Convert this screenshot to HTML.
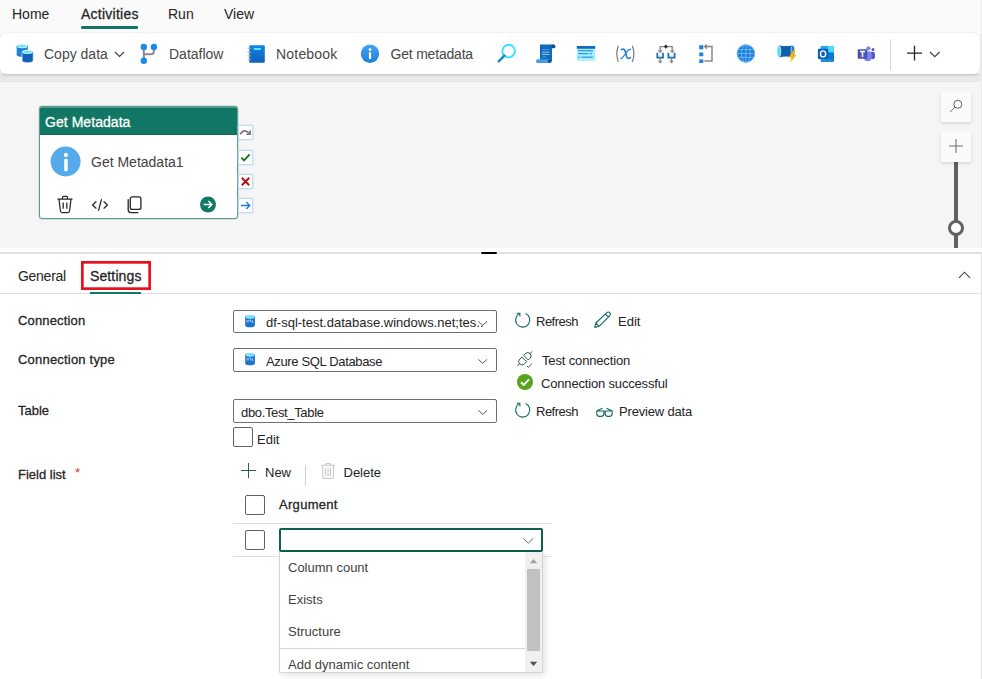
<!DOCTYPE html>
<html><head><meta charset="utf-8">
<style>
*{box-sizing:border-box;margin:0;padding:0}
html,body{width:982px;height:679px;overflow:hidden;background:#fafafa;font-family:"Liberation Sans",sans-serif;color:#242424}
.a{position:absolute}
.t{position:absolute;white-space:nowrap;line-height:1}
.s14{font-size:14px}
.s13{font-size:13px}
.b{font-weight:700}
.sb{-webkit-text-stroke:0.28px currentColor}
svg{position:absolute;overflow:visible}
</style></head><body>

<!-- top tabs -->
<div class="t s14" style="left:12px;top:7px">Home</div>
<div class="t s14 sb" style="left:81px;top:7px;letter-spacing:0.25px">Activities</div>
<div class="a" style="left:81px;top:26px;width:57px;height:3px;background:#117865;border-radius:1px"></div>
<div class="t s14" style="left:168px;top:7px">Run</div>
<div class="t s14" style="left:224px;top:7px">View</div>

<!-- toolbar card -->
<div class="a" style="left:0;top:74px;width:982px;height:8px;background:linear-gradient(#e6e6e6,#ececec)"></div>
<div class="a" style="left:0;top:33px;width:980px;height:41px;background:#fff;border-radius:6px;box-shadow:0 1px 3px rgba(0,0,0,.18),0 0 1px rgba(0,0,0,.1)"></div>

<div class="t s14" style="left:44px;top:47px;color:#474747">Copy data</div>
<div class="t s14" style="left:169px;top:47px;color:#474747">Dataflow</div>
<div class="t s14" style="left:276px;top:47px;color:#474747;letter-spacing:0.2px">Notebook</div>
<div class="t s14" style="left:390.5px;top:47px;color:#474747;letter-spacing:-0.2px">Get metadata</div>


<!-- toolbar icons -->
<svg style="left:16px;top:44px" width="18" height="19" viewBox="0 0 18 19">
 <path d="M0.7,2.3 A5.6,1.9 0 0 1 11.9,2.3 V11 A5.6,1.9 0 0 1 0.7,11 Z" fill="#1d7fd6"/>
 <ellipse cx="6.3" cy="2.3" rx="5.0" ry="1.5" fill="#50e6ff" stroke="#fff" stroke-width=".8"/>
 <path d="M6.1,8 A5.55,1.9 0 0 1 17.2,8 V16.8 A5.55,1.9 0 0 1 6.1,16.8 Z" fill="#0f62b6" stroke="#fff" stroke-width=".6"/>
 <ellipse cx="11.65" cy="8" rx="5.0" ry="1.5" fill="#50e6ff" stroke="#fff" stroke-width=".8"/>
</svg>
<svg style="left:114px;top:51px" width="11" height="7" viewBox="0 0 11 7"><path d="M1,1 L5.5,5.5 L10,1" fill="none" stroke="#424242" stroke-width="1.2"/></svg>

<svg style="left:138px;top:42px" width="20" height="22" viewBox="0 0 20 22">
 <path d="M5.8,5 V18.8 M5.8,12.2 H12.9 Q15.9,12.2 15.9,9 V5" fill="none" stroke="#8a8a8a" stroke-width="2"/>
 <circle cx="5.8" cy="5" r="3.2" fill="#1f8ae6"/><circle cx="15.9" cy="5" r="3.2" fill="#1f8ae6"/><circle cx="5.8" cy="18.8" r="3.2" fill="#1f8ae6"/>
</svg>

<svg style="left:246px;top:44px" width="20" height="20" viewBox="0 0 20 20">
 <defs><linearGradient id="nb" x1="0" y1="0" x2="0" y2="1"><stop offset="0" stop-color="#1684e0"/><stop offset="1" stop-color="#0b62b8"/></linearGradient></defs>
 <rect x="3.2" y="1.2" width="15.6" height="17.5" rx="1" fill="url(#nb)"/>
 <rect x="7.9" y="4" width="7" height="2" fill="#50e6ff"/>
 <rect x="1.6" y="3.8" width="3" height="1.2" fill="#b8b8b8"/><rect x="1.6" y="7.6" width="3" height="1.2" fill="#b8b8b8"/><rect x="1.6" y="11.2" width="3" height="1.2" fill="#b8b8b8"/><rect x="1.6" y="14.8" width="3" height="1.2" fill="#b8b8b8"/>
</svg>

<svg style="left:360px;top:44px" width="20" height="20" viewBox="0 0 20 20">
 <defs><linearGradient id="ig" x1="0" y1="0" x2="0" y2="1"><stop offset="0" stop-color="#44a4ee"/><stop offset="1" stop-color="#1c7fdc"/></linearGradient></defs>
 <circle cx="10" cy="9.8" r="9.2" fill="url(#ig)"/>
 <circle cx="10" cy="5.6" r="1.35" fill="#fff"/><rect x="8.9" y="8" width="2.2" height="7.3" rx="1" fill="#fff"/>
</svg>

<svg style="left:496px;top:42px" width="22" height="22" viewBox="0 0 22 22">
 <circle cx="12.6" cy="9.1" r="6.3" fill="none" stroke="#3fe0ff" stroke-width="2"/>
 <path d="M8.3,13.6 L2.7,19.4" stroke="#1a8fc0" stroke-width="2.6" stroke-linecap="round"/>
</svg>

<svg style="left:536px;top:44px" width="20" height="20" viewBox="0 0 20 20">
 <path d="M4.2,0.6 H17.5 A1.8,1.8 0 0 1 17.5,4.2 H16 V16.5 A2,2 0 0 1 14,18.5 H4 V2.6 A2,2 0 0 1 4.2,0.6Z" fill="#0f6cbd"/>
 <ellipse cx="17.3" cy="2.4" rx="2.1" ry="1.8" fill="#0a4f96"/>
 <path d="M1.8,15.3 H13.3 V19 H1.8 A1.85,1.85 0 0 1 1.8,15.3Z" fill="#4a9ae8"/>
 <ellipse cx="13.5" cy="17.2" rx="1.6" ry="1.9" fill="#0a55a0"/>
 <rect x="6" y="5.2" width="7.5" height="1" fill="#3f95e0"/><rect x="6" y="7.7" width="7.5" height="1" fill="#8cc4f2"/><rect x="6" y="10" width="7.5" height="1" fill="#8cc4f2"/><rect x="6" y="12.5" width="4.5" height="1" fill="#3f95e0"/>
</svg>

<svg style="left:576px;top:45px" width="20" height="17" viewBox="0 0 20 17">
 <rect x="0.8" y="1.1" width="18.4" height="14.7" fill="#a6efff"/>
 <rect x="0.8" y="1.1" width="18.4" height="2.7" rx=".6" fill="#0f6cbd"/>
 <rect x="2.2" y="5.2" width="14.6" height="1.1" fill="#2185e0"/>
 <rect x="2.2" y="8.1" width="10" height="1.1" fill="#2185e0"/><rect x="13.6" y="8.1" width="2.2" height="1.1" fill="#2185e0"/>
 <rect x="2.2" y="11.6" width="1.6" height="1.1" fill="#2185e0"/><rect x="5.4" y="11.6" width="11.4" height="1.1" fill="#2185e0"/>
</svg>
<svg style="left:614px;top:44px" width="24" height="20" viewBox="0 0 24 20">
 <path d="M4.3,1.8 Q1.4,9.8 4.3,17.8 M18.2,1.8 Q21.6,9.8 18.2,17.8" fill="none" stroke="#6e6e6e" stroke-width="1.1"/>
 <path d="M7.6,5.6 C9.4,4.6 10.6,5.2 11.3,7.6 L12.6,12.4 C13.2,14.4 14.4,15 16.4,13.6" fill="none" stroke="#1f7fd8" stroke-width="1.7" stroke-linecap="round"/>
 <path d="M16.4,5.4 C15.6,5 15,5.4 14.2,6.2 L9,13 C8.2,14.2 7.6,14.8 6.9,14.3" fill="none" stroke="#1f7fd8" stroke-width="1.2" stroke-linecap="round"/>
</svg>

<svg style="left:655px;top:44px" width="22" height="20" viewBox="0 0 22 20">
 <path d="M5.2,8 V2.6 H17.2 V8" fill="none" stroke="#8a8a8a" stroke-width="1.4"/>
 <path d="M3.4,6.4 L5.2,8.4 L7,6.4 M15.4,6.4 L17.2,8.4 L19,6.4" fill="none" stroke="#8a8a8a" stroke-width="1.3"/>
 <path d="M10.9,0.5 L13,2.6 L10.9,4.7 L8.8,2.6Z" fill="#333"/>
 <path d="M2.3,8.7 V13.6 H8 V8.7 M13.4,8.7 V13.6 H19.6 V8.7" fill="none" stroke="#0f6cbd" stroke-width="1.7"/>
 <path d="M5.2,13.6 V18.6 M16.5,13.6 V18.6" stroke="#8a8a8a" stroke-width="1.3"/>
 <path d="M3.6,16.8 L5.2,18.6 L6.8,16.8 M14.9,16.8 L16.5,18.6 L18.1,16.8" fill="none" stroke="#8a8a8a" stroke-width="1.3"/>
</svg>

<svg style="left:698px;top:44px" width="16" height="20" viewBox="0 0 16 20">
 <rect x="1.2" y="1.2" width="4.1" height="4.1" fill="#1b86e0"/><rect x="1.2" y="8.5" width="4.1" height="3.8" fill="#1b86e0"/><rect x="1.2" y="15.4" width="4.1" height="3.6" fill="#1b86e0"/>
 <path d="M6.4,17.1 H14 V2.6 H7" fill="none" stroke="#8a8a8a" stroke-width="1.5"/>
 <path d="M9,0.6 L6.6,2.6 L9,4.6" fill="none" stroke="#8a8a8a" stroke-width="1.4"/>
</svg>

<svg style="left:736px;top:44px" width="20" height="20" viewBox="0 0 20 20">
 <circle cx="9.9" cy="9.5" r="9" fill="#1b7fdb"/>
 <g fill="none" stroke="#7cbcf2" stroke-width=".8"><ellipse cx="9.9" cy="9.5" rx="4.4" ry="9"/><path d="M9.9,0.5 V18.5 M1.6,5.6 H18.2 M0.9,9.5 H18.9 M1.6,13.4 H18.2"/><circle cx="9.9" cy="9.5" r="8.8"/></g>
</svg>

<svg style="left:776px;top:44px" width="21" height="19" viewBox="0 0 21 19">
 <path d="M3,1.2 Q10,3 17,1.2 V13.4 Q10,11.6 3,13.4Z" fill="#0f5fb0"/>
 <ellipse cx="17" cy="7.3" rx="1.9" ry="6.1" fill="#1a7fd6" stroke="#fff" stroke-width=".6"/>
 <ellipse cx="2.8" cy="7.3" rx="1.9" ry="6.1" fill="#50e0ff" stroke="#fff" stroke-width=".7"/>
 <path d="M17.8,5.6 L12.6,13.6 H15.8 L13.6,18.8 L20.6,11 H17.4 L19.2,5.6Z" fill="#ffb100"/>
</svg>

<svg style="left:817px;top:45px" width="18" height="17" viewBox="0 0 18 17">
 <rect x="3.8" y="0.9" width="13.2" height="15.9" rx=".8" fill="#0f78d4"/>
 <rect x="10.4" y="0.9" width="6.6" height="6.5" fill="#50d9ff"/>
 <rect x="3.8" y="0.9" width="6.6" height="6.5" fill="#28a8ea"/>
 <path d="M3.8,9 L17,16.8 H3.8Z" fill="#1490df"/>
 <rect x="0.9" y="3.7" width="10.4" height="10.4" rx="1" fill="#0a5fb0"/>
 <ellipse cx="6.1" cy="8.9" rx="2.6" ry="3" fill="none" stroke="#fff" stroke-width="1.4"/>
</svg>

<svg style="left:857px;top:46px" width="18" height="16" viewBox="0 0 18 16">
 <circle cx="16" cy="3.4" r="1.5" fill="#5059c9"/>
 <rect x="13.7" y="5.8" width="4.2" height="7.4" rx="2" fill="#5059c9"/>
 <circle cx="11.4" cy="2.3" r="2.1" fill="#7b83eb"/>
 <path d="M7.2,5.6 H14.6 V11.5 A3.8,3.8 0 0 1 7,11.5Z" fill="#7b83eb"/>
 <rect x="0.7" y="3.2" width="9.6" height="9.6" rx=".8" fill="#4b53bc"/>
 <path d="M3,5.6 H8 M5.5,5.6 V11" stroke="#fff" stroke-width="1.5"/>
</svg>

<div class="a" style="left:890px;top:39px;width:1px;height:31px;background:#d6d6d6"></div>
<svg style="left:906px;top:45px" width="17" height="17" viewBox="0 0 17 17"><path d="M8.5,0.8 V15.6 M1,8.2 H16" stroke="#242424" stroke-width="1.3"/></svg>
<svg style="left:929px;top:51px" width="12" height="7" viewBox="0 0 12 7"><path d="M1,1 L5.8,5.6 L10.6,1" fill="none" stroke="#424242" stroke-width="1.2"/></svg>

<!-- canvas -->
<div class="a" style="left:981px;top:33px;width:1px;height:221px;background:#e9e9e9"></div>
<div class="a" style="left:0;top:81px;width:981px;height:167px;background:#f5f5f5;border-top:1px solid #e3e3e3;border-top-right-radius:6px"></div>

<!-- activity card -->
<div class="a" style="left:39px;top:106px;width:199px;height:113px;background:#fff;border:1px solid #5a9f91;border-radius:3px;overflow:hidden;box-shadow:0 0 0 .5px rgba(90,159,145,.45)">
  <div class="a" style="left:0;top:0;width:199px;height:28px;background:#127664;border-top:1px solid #4f9a8a;border-bottom:1px solid #0b6a59"></div>
</div>
<div class="t s14 sb" style="left:45px;top:115px;color:#fff;letter-spacing:0.05px">Get Metadata</div>
<div class="t s14" style="left:91px;top:155px;color:#424242">Get Metadata1</div>


<svg style="left:50px;top:146px" width="31" height="31" viewBox="0 0 31 31">
 <circle cx="15.6" cy="15.5" r="15" fill="#55aaeb"/>
 <circle cx="15.9" cy="8.9" r="2.1" fill="#fff"/><rect x="14.2" y="12.8" width="3.5" height="12.4" rx="1.2" fill="#fff"/>
</svg>
<svg style="left:56px;top:195px" width="18" height="19" viewBox="0 0 18 19">
 <path d="M1.5,4 H16.5 M6.5,4 V2.6 A1.3,1.3 0 0 1 7.8,1.3 H10.2 A1.3,1.3 0 0 1 11.5,2.6 V4 M3,4 L4.4,15.8 A2,2 0 0 0 6.4,17.6 H11.6 A2,2 0 0 0 13.6,15.8 L15,4 M7.2,7.6 V13.8 M10.8,7.6 V13.8" fill="none" stroke="#242424" stroke-width="1.25"/>
</svg>
<svg style="left:91px;top:198px" width="18" height="14" viewBox="0 0 18 14">
 <path d="M5,3.8 L1.6,7 L5,10.2 M13,3.8 L16.4,7 L13,10.2 M10.4,1.6 L7.6,12.4" fill="none" stroke="#242424" stroke-width="1.25" stroke-linecap="round"/>
</svg>
<svg style="left:126px;top:195px" width="17" height="19" viewBox="0 0 17 19">
 <rect x="4.3" y="1.8" width="10.6" height="12.6" rx="2" fill="none" stroke="#242424" stroke-width="1.3"/>
 <path d="M2.2,4.2 V14.8 A2.8,2.8 0 0 0 5,17.6 H12.4" fill="none" stroke="#242424" stroke-width="1.3"/>
</svg>
<svg style="left:199px;top:196px" width="18" height="18" viewBox="0 0 18 18">
 <circle cx="9" cy="8.5" r="8" fill="#117865"/>
 <path d="M4.6,8.5 H12.8 M9.4,5 L12.9,8.5 L9.4,12" fill="none" stroke="#fff" stroke-width="1.4"/>
</svg>
<!-- handles -->
<div class="a" style="left:238.5px;top:126px;width:13px;height:13px;background:#fff;box-shadow:0 0 1.5px 1px #b4d3f0"></div>
<div class="a" style="left:238.5px;top:151px;width:13px;height:13px;background:#fff;box-shadow:0 0 1.5px 1px #b4d3f0"></div>
<div class="a" style="left:238.5px;top:175px;width:13px;height:13px;background:#fff;box-shadow:0 0 1.5px 1px #b4d3f0"></div>
<div class="a" style="left:238.5px;top:199px;width:13px;height:13px;background:#fff;box-shadow:0 0 1.5px 1px #b4d3f0"></div>
<svg style="left:238.5px;top:126px" width="13" height="13" viewBox="0 0 13 13"><path d="M1.2,8.2 Q4.6,2.6 9,6.2" fill="none" stroke="#7a7a7a" stroke-width="1.8"/><path d="M6.6,9 L12,9 L12,3.8Z" fill="#7a7a7a"/></svg>
<svg style="left:238.5px;top:151px" width="13" height="13" viewBox="0 0 14 14"><path d="M2.5,7.2 L5.5,10.2 L11.5,3.6" fill="none" stroke="#107c10" stroke-width="2"/></svg>
<svg style="left:238.5px;top:175px" width="13" height="13" viewBox="0 0 14 14"><path d="M3,3 L11,11 M11,3 L3,11" fill="none" stroke="#b3101c" stroke-width="2.1"/></svg>
<svg style="left:238.5px;top:199px" width="13" height="13" viewBox="0 0 14 14"><path d="M2,7 H11.5 M7.8,3.3 L11.5,7 L7.8,10.7" fill="none" stroke="#1f7ad6" stroke-width="1.5"/></svg>

<!-- zoom controls -->
<div class="a" style="left:941px;top:92px;width:30px;height:30px;background:#fafafa;box-shadow:0 1.5px 3px rgba(0,0,0,.13)"></div>
<svg style="left:941px;top:92px" width="30" height="30" viewBox="0 0 30 30"><circle cx="16.8" cy="12.3" r="4" fill="none" stroke="#616161" stroke-width="1"/><path d="M14,15.1 L9.2,19.9" stroke="#616161" stroke-width="1"/></svg>
<div class="a" style="left:954px;top:160px;width:4px;height:88px;background:#616161"></div>
<div class="a" style="left:941px;top:132px;width:30px;height:30px;background:#fafafa;box-shadow:0 1.5px 3px rgba(0,0,0,.13)"></div>
<svg style="left:941px;top:132px" width="30" height="30" viewBox="0 0 30 30"><path d="M15,7 V21 M8,14 H22" stroke="#707070" stroke-width="1.1"/></svg>
<div class="a" style="left:948px;top:220px;width:16px;height:16px;border-radius:50%;background:#fff;border:3px solid #616161"></div>

<!-- bottom panel -->
<div class="a" style="left:0;top:248px;width:982px;height:431px;background:#fff"></div>
<div class="a" style="left:0;top:252px;width:982px;height:2px;background:#e0e0e0"></div>
<div class="a" style="left:481px;top:252px;width:16px;height:2px;background:#000;border-radius:1px;box-shadow:0 0 0 1px #fff"></div>
<div class="a" style="left:981px;top:254px;width:1px;height:425px;background:#e0e0e0"></div>
<div class="a" style="left:980px;top:0;width:2px;height:33px;background:linear-gradient(90deg,#f6f6f6,#ececec)"></div>

<div class="t s14" style="left:18px;top:269px;letter-spacing:-0.28px">General</div>
<div class="t s14 sb" style="left:90px;top:269px;letter-spacing:0.12px">Settings</div>
<div class="a" style="left:0;top:293px;width:981px;height:1px;background:#e0e0e0"></div>
<svg style="left:958px;top:271px" width="13" height="8" viewBox="0 0 13 8"><path d="M1,6.8 L6.5,1.2 L12,6.8" fill="none" stroke="#424242" stroke-width="1.1"/></svg>
<div class="a" style="left:90px;top:292px;width:51px;height:2px;background:#117865"></div>
<svg style="left:81px;top:261px" width="70" height="29" viewBox="0 0 70 29"><rect x="1.35" y="1.35" width="67.3" height="26.3" fill="none" stroke="#e8111c" stroke-width="2.7"/></svg>

<!-- labels -->
<div class="t s13 sb" style="left:18px;top:314px;letter-spacing:0.15px">Connection</div>
<div class="t s13 sb" style="left:18px;top:353px;letter-spacing:0.2px">Connection type</div>
<div class="t s13 sb" style="left:18px;top:404px">Table</div>
<div class="t s13 sb" style="left:18px;top:468px">Field list</div>
<div class="t s13" style="left:75px;top:466px;color:#d13438">*</div>

<!-- inputs -->
<div class="a" style="left:233px;top:310px;width:264px;height:23px;border:1px solid #707070;border-radius:2px"></div>
<div class="a" style="left:233px;top:348px;width:264px;height:24px;border:1px solid #707070;border-radius:2px"></div>
<div class="a" style="left:233px;top:399px;width:264px;height:24px;border:1px solid #707070;border-radius:2px"></div>
<div class="t s13" style="left:266px;top:316px">df-sql-test.database.windows.net;tes..</div>
<div class="t s13" style="left:266px;top:355px;letter-spacing:-0.35px">Azure SQL Database</div>
<div class="t s13" style="left:241px;top:406px;letter-spacing:-0.35px">dbo.Test_Table</div>
<div class="a" style="left:233px;top:427px;width:20px;height:20px;border:1px solid #616161;border-radius:2px"></div>
<div class="t s13" style="left:257px;top:433px">Edit</div>

<div class="t s13" style="left:536px;top:315px;letter-spacing:-0.5px">Refresh</div>
<div class="t s13" style="left:618px;top:315px">Edit</div>
<div class="t s13" style="left:542px;top:354px;letter-spacing:-0.15px">Test connection</div>
<div class="t s13" style="left:541px;top:377px;letter-spacing:-0.17px">Connection successful</div>
<div class="t s13" style="left:536px;top:405px;letter-spacing:-0.5px">Refresh</div>
<div class="t s13" style="left:619px;top:405px;letter-spacing:-0.18px">Preview data</div>

<!-- field list -->
<div class="t s13" style="left:265px;top:466px">New</div>
<div class="a" style="left:305px;top:465px;width:1px;height:21px;background:#d1d1d1"></div>
<div class="t s13" style="left:343.5px;top:466px">Delete</div>
<div class="a" style="left:245px;top:495px;width:20px;height:20px;border:1px solid #616161;border-radius:2px"></div>
<div class="t s13 sb" style="left:279px;top:498px;letter-spacing:0.3px">Argument</div>
<div class="a" style="left:233px;top:523px;width:318px;height:1px;background:#e0e0e0"></div>
<div class="a" style="left:245px;top:530px;width:20px;height:20px;border:1px solid #616161;border-radius:2px"></div>
<div class="a" style="left:233px;top:556px;width:318px;height:1px;background:#e0e0e0"></div>
<div class="a" style="left:279px;top:528px;width:264px;height:24px;border:2px solid #0e5e52;border-radius:2px;background:#fff"></div>


<!-- form icons -->
<svg style="left:244px;top:314px" width="12" height="14" viewBox="0 0 12 14">
 <path d="M1.2,2.9 A4.85,1.8 0 0 1 10.9,2.9 V11.4 A4.85,1.8 0 0 1 1.2,11.4Z" fill="#1a73d0"/>
 <ellipse cx="6.05" cy="2.9" rx="4.3" ry="1.4" fill="#50e6ff" stroke="#fff" stroke-width=".6"/>
 <path d="M3,6 V8.5 M4.2,6 V8.5 M5.2,6.2 H7 M6.8,6 V8.6 M8.3,6 V8.5 H9.3" stroke="#cfe6fb" stroke-width=".7" fill="none"/>
</svg>
<svg style="left:244px;top:352px" width="12" height="14" viewBox="0 0 12 14">
 <path d="M1.2,2.9 A4.85,1.8 0 0 1 10.9,2.9 V11.4 A4.85,1.8 0 0 1 1.2,11.4Z" fill="#1a73d0"/>
 <ellipse cx="6.05" cy="2.9" rx="4.3" ry="1.4" fill="#50e6ff" stroke="#fff" stroke-width=".6"/>
 <path d="M3,6 V8.5 M4.2,6 V8.5 M5.2,6.2 H7 M6.8,6 V8.6 M8.3,6 V8.5 H9.3" stroke="#cfe6fb" stroke-width=".7" fill="none"/>
</svg>
<svg style="left:477px;top:320px" width="12" height="7" viewBox="0 0 12 7"><path d="M1.4,1.4 L5.7,5.3 L10,1.4" fill="none" stroke="#555" stroke-width="1"/></svg>
<svg style="left:477px;top:358px" width="12" height="7" viewBox="0 0 12 7"><path d="M1.4,1.4 L5.7,5.3 L10,1.4" fill="none" stroke="#555" stroke-width="1"/></svg>
<svg style="left:477px;top:409px" width="12" height="7" viewBox="0 0 12 7"><path d="M1.4,1.4 L5.7,5.3 L10,1.4" fill="none" stroke="#555" stroke-width="1"/></svg>

<svg style="left:512px;top:310px" width="20" height="20" viewBox="0 0 20 20">
 <path d="M7.6,3.6 A7.1,7.1 0 1 0 13.6,3.5" fill="none" stroke="#0f6b5c" stroke-width="1.1"/>
 <path d="M4.6,3.3 H7.9 V6.6" fill="none" stroke="#0f6b5c" stroke-width="1.1"/>
</svg>
<svg style="left:512px;top:400px" width="20" height="20" viewBox="0 0 20 20">
 <path d="M7.6,3.6 A7.1,7.1 0 1 0 13.6,3.5" fill="none" stroke="#0f6b5c" stroke-width="1.1"/>
 <path d="M4.6,3.3 H7.9 V6.6" fill="none" stroke="#0f6b5c" stroke-width="1.1"/>
</svg>
<svg style="left:593px;top:310px" width="20" height="20" viewBox="0 0 20 20">
 <path d="M1.8,17.4 L2.8,13 L13.8,2.6 A2.2,2.2 0 0 1 16.9,5.7 L6.2,16.3Z M12.4,4 L15.5,7.1 M2.9,13.1 L6,16.2" fill="none" stroke="#0f6b5c" stroke-width="1.1" stroke-linejoin="round"/>
</svg>
<svg style="left:516px;top:350px" width="18" height="18" viewBox="0 0 18 18">
 <path d="M1.4,16 L3.6,13.8 M13.8,3.8 L16,1.4" stroke="#30525a" stroke-width="1"/>
 <path d="M3.6,13.8 A3.3,3.3 0 0 1 3.9,9 L5.9,7 L10.6,11.7 L8.6,13.7 A3.3,3.3 0 0 1 3.6,13.8Z" fill="none" stroke="#30525a" stroke-width="1"/>
 <path d="M7.6,5.3 L9.3,3.6 A3.3,3.3 0 0 1 14,8.3 L12.3,10Z" fill="none" stroke="#30525a" stroke-width="1"/>
 <path d="M11,16 L12.4,17.2 L15.8,13.8" fill="none" stroke="#30525a" stroke-width="1"/>
</svg>
<svg style="left:517px;top:374px" width="16" height="16" viewBox="0 0 16 16">
 <circle cx="8" cy="8" r="8" fill="#58a31c"/>
 <path d="M4,8.3 L6.8,11 L12,5.4" fill="none" stroke="#fff" stroke-width="1.9"/>
</svg>
<svg style="left:595px;top:406px" width="19" height="12" viewBox="0 0 19 12">
 <path d="M1.5,5 H17.6 M1.8,5 V7.8 A2.6,2.6 0 0 0 4.4,10.4 H6.2 A2.6,2.6 0 0 0 8.8,7.8 V5.2 M10.2,5.2 V7.8 A2.6,2.6 0 0 0 12.8,10.4 H14.6 A2.6,2.6 0 0 0 17.2,7.8 V5 M2,4.8 L7.5,2.2 M16.9,4.8 L11.5,2.2" fill="none" stroke="#0f6b5c" stroke-width="1.1"/>
</svg>

<svg style="left:240px;top:462px" width="17" height="17" viewBox="0 0 17 17"><path d="M8.5,1 V16.2 M1,8.5 H16.2" stroke="#2a5f5a" stroke-width="1"/></svg>
<svg style="left:320px;top:462px" width="16" height="18" viewBox="0 0 16 18">
 <path d="M1.4,3.2 H14.8 M5.8,3.2 V1.6 H10.4 V3.2 M2.8,3.2 V15 A1.4,1.4 0 0 0 4.2,16.4 H12 A1.4,1.4 0 0 0 13.4,15 V3.2 M5.7,5.6 V14 M8.1,5.6 V14 M10.5,5.6 V14" fill="none" stroke="#c4c4c4" stroke-width="1"/>
</svg>

<svg style="left:522px;top:537px" width="13" height="8" viewBox="0 0 13 8"><path d="M1.5,1.5 L6.3,6.2 L11,1.5" fill="none" stroke="#616161" stroke-width="1"/></svg>

<!-- dropdown -->
<div class="a" style="left:279px;top:552px;width:264px;height:121px;background:#fff;border:1px solid #d6d6d6;border-top:none;box-shadow:2px 2px 6px rgba(0,0,0,.12)"></div>
<div class="t s13" style="left:288px;top:561px;color:#424242">Column count</div>
<div class="t s13" style="left:288px;top:593px;color:#424242">Exists</div>
<div class="t s13" style="left:288px;top:625px;color:#424242">Structure</div>
<div class="a" style="left:280px;top:648px;width:245px;height:1px;background:#d6d6d6"></div>
<div class="t s13" style="left:288px;top:658px;color:#424242">Add dynamic content</div>
<div class="a" style="left:525px;top:552px;width:17px;height:120px;background:#f0f0f0"></div>
<div class="a" style="left:527px;top:569px;width:13px;height:82px;background:#c1c1c1"></div>


<svg style="left:525px;top:552px" width="17" height="120" viewBox="0 0 17 120">
 <path d="M4.8,11.3 L8.5,7 L12.2,11.3Z" fill="#a3a3a3"/>
 <path d="M4.8,109.7 L8.5,114 L12.2,109.7Z" fill="#505050"/>
</svg>

</body></html>
